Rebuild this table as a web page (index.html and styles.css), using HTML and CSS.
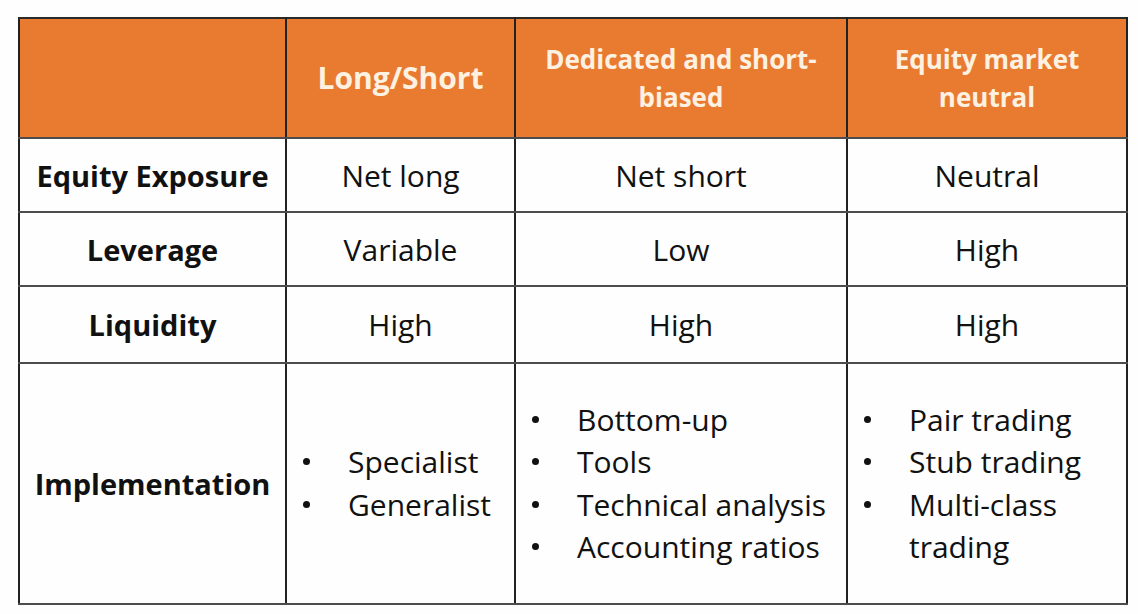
FILE: index.html
```html
<!DOCTYPE html>
<html>
<head>
<meta charset="utf-8">
<link rel="stylesheet" href="styles.css">
</head>
<body>
<table class="grid">
  <colgroup>
    <col class="c1"><col class="c2"><col class="c3"><col class="c4">
  </colgroup>
  <thead>
    <tr class="head">
      <th></th>
      <th class="big">Long/Short</th>
      <th>Dedicated and short-<br>biased</th>
      <th>Equity market<br>neutral</th>
    </tr>
  </thead>
  <tbody>
    <tr class="r1">
      <td class="label">Equity Exposure</td>
      <td>Net long</td>
      <td>Net short</td>
      <td>Neutral</td>
    </tr>
    <tr class="r2">
      <td class="label">Leverage</td>
      <td>Variable</td>
      <td>Low</td>
      <td>High</td>
    </tr>
    <tr class="r3">
      <td class="label">Liquidity</td>
      <td>High</td>
      <td>High</td>
      <td>High</td>
    </tr>
    <tr class="r4">
      <td class="label">Implementation</td>
      <td class="listcell">
        <ul class="bullets">
          <li>Specialist</li>
          <li>Generalist</li>
        </ul>
      </td>
      <td class="listcell">
        <ul class="bullets">
          <li>Bottom-up</li>
          <li>Tools</li>
          <li>Technical analysis</li>
          <li>Accounting ratios</li>
        </ul>
      </td>
      <td class="listcell">
        <ul class="bullets">
          <li>Pair trading</li>
          <li>Stub trading</li>
          <li>Multi-class trading</li>
        </ul>
      </td>
    </tr>
  </tbody>
</table>
</body>
</html>
```

FILE: styles.css
```css
html, body {
  margin: 0;
  padding: 0;
  background: #fdfefd;
}

body {
  font-family: "Open Sans", "Liberation Sans", sans-serif;
  color: #111;
}

.grid {
  margin: 17px 0 0 18px;
  border-collapse: collapse;
  table-layout: fixed;
  width: 1110px;
}

.c1 { width: 267px; }
.c2 { width: 229px; }
.c3 { width: 332px; }
.c4 { width: 280px; }

.grid th,
.grid td {
  border-top: 2px solid #4c4c4c;
  border-bottom: 2px solid #4c4c4c;
  border-left: 2px solid #222;
  border-right: 2px solid #222;
  text-align: center;
  vertical-align: middle;
  padding: 0;
  font-size: 30px;
}

.head th {
  background: #e97b31;
  color: #fdf1e2;
  font-weight: 700;
  font-size: 26px;
  line-height: 38px;
  height: 118px;
  border-top-color: #2a2a2a;
}

.head th.big {
  font-size: 30px;
}

.r1 td { height: 72px; }
.r2 td { height: 72px; }
.r3 td { height: 75px; }
.r4 td { height: 239px; }

.grid td.label {
  font-weight: 700;
  font-size: 29px;
}

.grid td.listcell {
  text-align: left;
}

.bullets {
  list-style: none;
  margin: 0;
  padding: 0 0 0 61px;
  line-height: 42.5px;
}

.bullets li {
  position: relative;
}

.bullets li::before {
  content: "";
  position: absolute;
  left: -45px;
  top: 17px;
  width: 7px;
  height: 7px;
  border-radius: 50%;
  background: #111;
}
```
